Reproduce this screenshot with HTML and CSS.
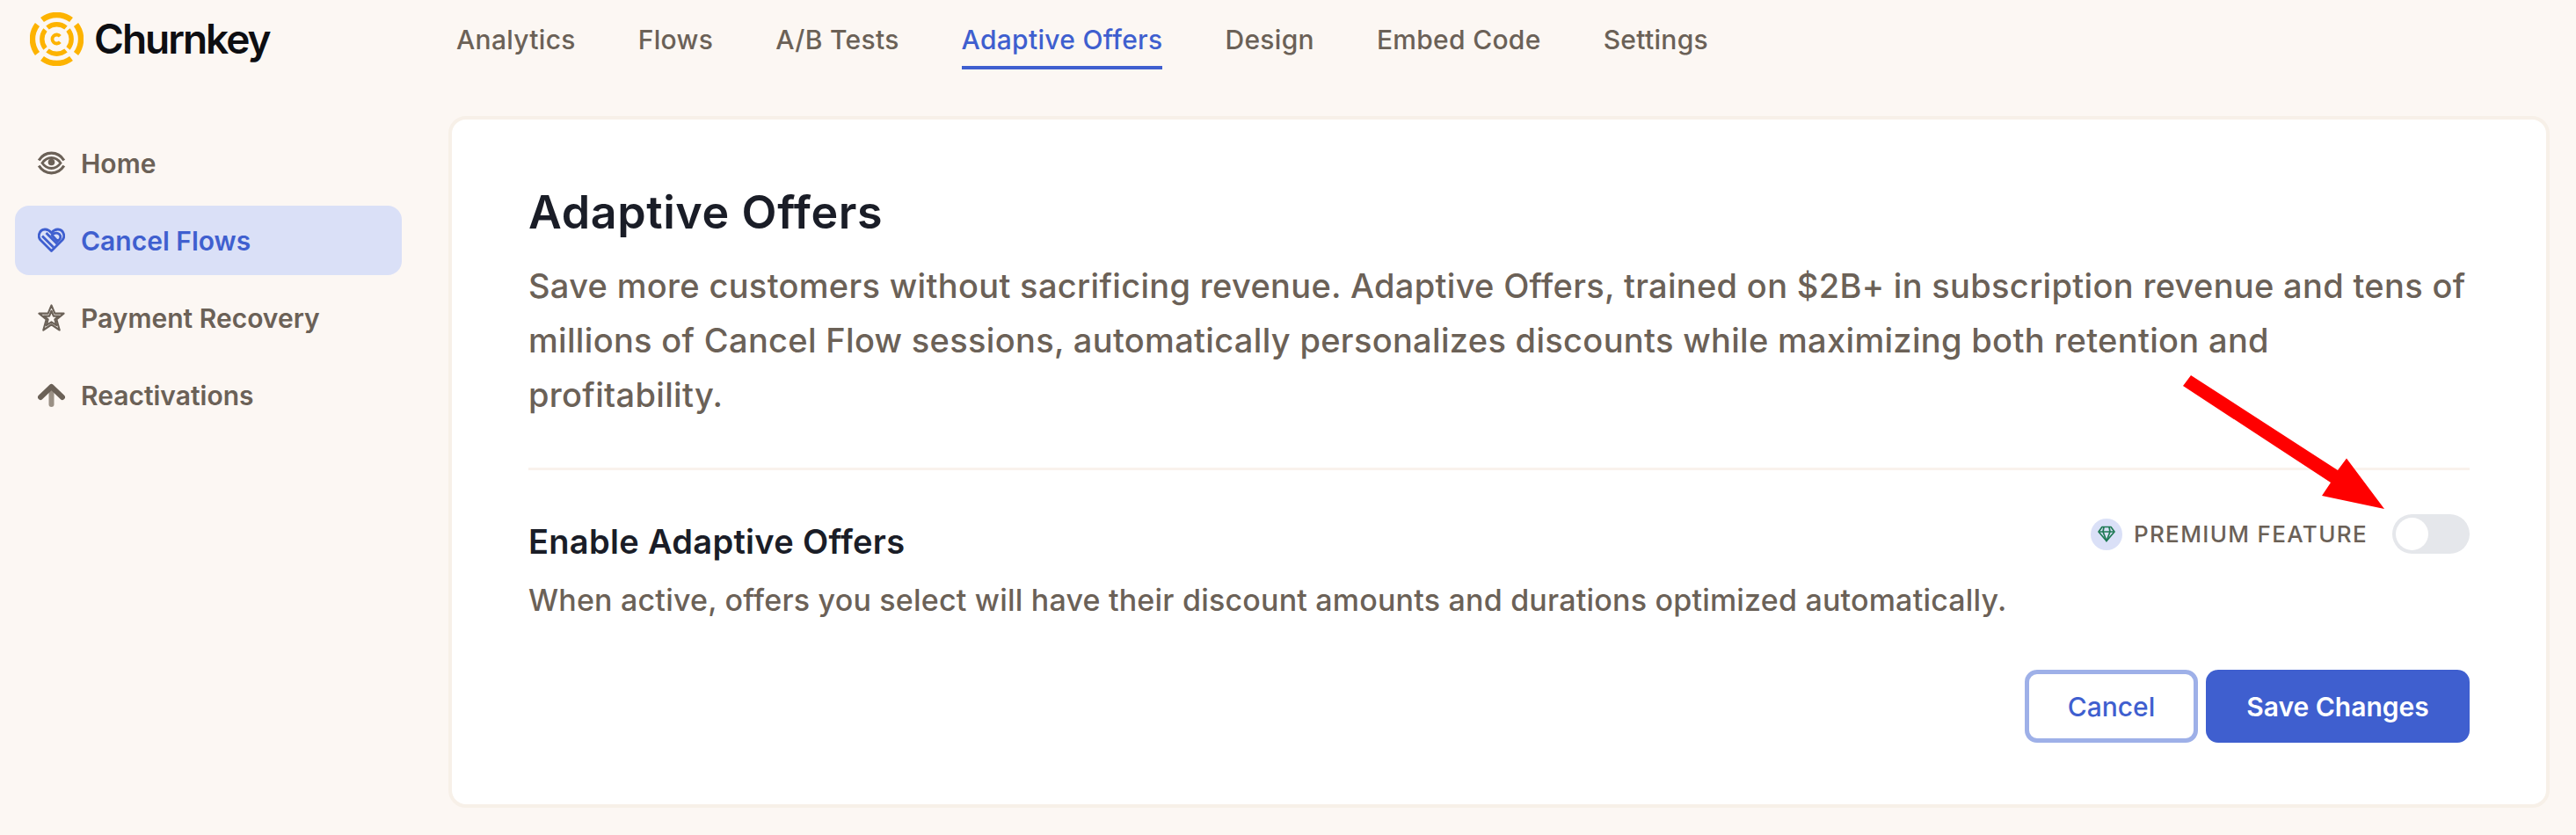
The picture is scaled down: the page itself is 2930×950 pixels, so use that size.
FILE: index.html
```html
<!DOCTYPE html>
<html lang="en">
<head>
<meta charset="utf-8">
<title>Churnkey – Adaptive Offers</title>
<link rel="stylesheet" href="styles.css">
</head>
<body>
<header class="topbar">
  <a class="brand">
    <svg class="logo" viewBox="0 0 61 61" aria-hidden="true">
      <defs>
        <g id="logo-quad" fill="none" stroke="#fdb300" stroke-linecap="butt">
          <path stroke-width="6.400" d="M14 8.500A27.300 27.300 0 0 1 47 8.500"/>
          <path stroke-width="5.400" d="M20 17.500A16.800 16.800 0 0 1 41 17.500"/>
        </g>
      </defs>
      <use href="#logo-quad"/>
      <use href="#logo-quad" transform="rotate(90 30.5 30.5)"/>
      <use href="#logo-quad" transform="rotate(180 30.5 30.5)"/>
      <use href="#logo-quad" transform="rotate(270 30.5 30.5)"/>
      <path d="M34.300 27.300A5 5 0 1 0 34.300 33.700" fill="none" stroke="#fdb300" stroke-width="3.800"/>
    </svg>
    <span class="brand-name">Churnkey</span>
  </a>
  <nav class="tabs">
    <a class="tab">Analytics</a>
    <a class="tab">Flows</a>
    <a class="tab">A/B Tests</a>
    <a class="tab tab-active">Adaptive Offers</a>
    <a class="tab">Design</a>
    <a class="tab">Embed Code</a>
    <a class="tab">Settings</a>
  </nav>
</header>

<div class="layout">
  <aside class="sidebar">
    <a class="side-item">
      <svg class="side-icon" viewBox="0 0 31 26" aria-hidden="true">
        <g fill="none" stroke="currentColor" stroke-width="3.200">
          <path d="M1.200 10C5 3.800 10 1.700 15.500 1.700S26 3.800 29.800 10"/>
          <path d="M1.200 16C5 22.200 10 24.300 15.500 24.300S26 22.200 29.800 16"/>
          <path stroke-width="2.800" d="M5 13C8 8.800 11.500 7 15.500 7S23 8.800 26 13C23 17.200 19.500 19 15.500 19S8 17.200 5 13Z"/>
        </g>
        <circle cx="15.500" cy="12" r="3.800" fill="currentColor"/>
      </svg>
      <span>Home</span>
    </a>
    <a class="side-item side-active">
      <svg class="side-icon" viewBox="0 0 31 28" aria-hidden="true">
        <g fill="none" stroke="currentColor" stroke-width="2.800" stroke-linejoin="round">
          <path d="M15.500 26 3 13.500C-.5 9.500 1.500 2 8 1.500 11 1.300 13.500 3 15.500 5.500 17.500 3 20 1.300 23 1.500 29.500 2 31.500 9.500 28 13.500Z"/>
          <path d="M5 9 18 22M9.500 5.500 22 18"/>
          <path d="M16 8 22.500 15C26 12.500 27 9.500 24.500 7 22 4.800 18.500 5.500 16 8Z"/>
        </g>
      </svg>
      <span>Cancel Flows</span>
    </a>
    <a class="side-item">
      <svg class="side-icon" viewBox="0 0 31 32" aria-hidden="true">
        <g fill="none" stroke="currentColor" stroke-linejoin="round">
          <path stroke-width="2.200" d="M15.500 1.500 19.500 11H30L21.500 18 25 30.500 15.500 24 6 30.500 9.500 18 1 11H11.500Z"/>
          <path stroke-width="2.200" d="M15.500 8 18 14H24.500L19.500 18 21.500 25 15.500 21 9.500 25 11.500 18 6.500 14H13Z"/>
        </g>
      </svg>
      <span>Payment Recovery</span>
    </a>
    <a class="side-item">
      <svg class="side-icon" viewBox="0 0 31 26" aria-hidden="true">
        <path d="M15.500 10V23.500" fill="none" stroke="#9a9085" stroke-width="6" stroke-linecap="round"/>
        <path d="M3 15.500 15.500 3.500 28 15.500" fill="none" stroke="currentColor" stroke-width="6" stroke-linecap="round" stroke-linejoin="round"/>
      </svg>
      <span>Reactivations</span>
    </a>
  </aside>

  <main class="card">
    <h1 class="title">Adaptive Offers</h1>
    <p class="lead">Save more customers without sacrificing revenue. Adaptive Offers, trained on $2B+ in subscription revenue and tens of millions of Cancel Flow sessions, automatically personalizes discounts while maximizing both retention and profitability.</p>
    <hr class="divider">
    <section class="setting">
      <div class="setting-text">
        <h2 class="setting-title">Enable Adaptive Offers</h2>
        <p class="setting-desc">When active, offers you select will have their discount amounts and durations optimized automatically.</p>
      </div>
      <div class="setting-control">
        <span class="gem">
          <svg class="gem-icon" viewBox="0 0 20 19" aria-hidden="true">
            <g fill="none" stroke="#1f7a55" stroke-width="1.700" stroke-linejoin="round">
              <path d="M5 1.500H15L19 7 10 17.500 1 7Z"/>
              <path d="M1 7H19M7 1.500 6 7 10 17.500 14 7 13 1.500"/>
            </g>
          </svg>
        </span>
        <span class="premium">PREMIUM FEATURE</span>
        <span class="toggle"><span class="knob"></span></span>
      </div>
    </section>
    <div class="actions">
      <button class="btn btn-ghost">Cancel</button>
      <button class="btn btn-primary">Save Changes</button>
    </div>
    <svg class="red-arrow" viewBox="0 0 240 160" aria-hidden="true">
      <polygon fill="#ff0000" points="3,15 12,3 179,111 189,97.500 232,155 161,140 171,125"/>
    </svg>
  </main>
</div>
</body>
</html>
```

FILE: styles.css
```css
* { box-sizing: border-box; }

html, body {
  margin: 0;
  height: 950px;
  overflow: hidden;
  background: #fcf7f3;
  font-family: Inter, "Liberation Sans", sans-serif;
  color: #6b6157;
}

a { color: inherit; text-decoration: none; }

.topbar {
  display: flex;
  height: 132px;
}

.brand {
  width: 519px;
  padding: 14px 0 0 34px;
  display: flex;
  align-items: flex-start;
  gap: 12px;
}

.logo { width: 61px; height: 61px; flex: none; }

.brand-name {
  font-size: 46px;
  line-height: 61px;
  font-weight: 600;
  letter-spacing: -2px;
  color: #0d0e12;
}

.tabs {
  display: flex;
  gap: 71px;
  align-items: flex-start;
}

.tab {
  display: block;
  font-size: 30px;
  line-height: 40px;
  font-weight: 500;
  letter-spacing: .3px;
  padding-top: 25px;
  height: 79px;
}

.tab-active {
  color: #3f5fcf;
  border-bottom: 4px solid #3f5fcf;
}

.layout {
  display: flex;
  height: 787px;
}

.sidebar {
  width: 510px;
  flex: none;
  padding: 14px 53px 0 17px;
  display: flex;
  flex-direction: column;
  gap: 9px;
}

.side-item {
  display: flex;
  align-items: center;
  gap: 18px;
  height: 79px;
  padding-left: 26px;
  border-radius: 16px;
  font-size: 30px;
  font-weight: 600;
}

.side-active {
  background: #dae0f7;
  color: #3f5fcf;
}

.side-icon { width: 31px; height: 31px; flex: none; }

.card {
  position: relative;
  width: 2390px;
  height: 787px;
  background: #fff;
  border: 4px solid #f7f0e8;
  border-radius: 20px;
  padding: 76px 87px 0;
}

.title {
  margin: 0 0 22px;
  font-size: 52px;
  line-height: 60px;
  font-weight: 600;
  letter-spacing: .6px;
  color: #1a1d27;
}

.lead {
  margin: 0;
  font-size: 38px;
  line-height: 62px;
  font-weight: 500;
  letter-spacing: .32px;
}

.divider {
  margin: 52px 0 50px;
  height: 3px;
  border: 0;
  background: #f9f2ec;
}

.setting {
  display: flex;
  justify-content: space-between;
  align-items: flex-start;
}

.setting-text { padding-top: 6px; }

.setting-title {
  margin: 0 0 20px;
  font-size: 38px;
  line-height: 50px;
  font-weight: 600;
  letter-spacing: .3px;
  color: #1a1d27;
}

.setting-desc {
  margin: 0;
  font-size: 34px;
  line-height: 44px;
  font-weight: 500;
  letter-spacing: .2px;
}

.setting-control {
  display: flex;
  align-items: center;
}

.gem {
  width: 36px;
  height: 36px;
  border-radius: 50%;
  background: #dae0f7;
  display: flex;
  align-items: center;
  justify-content: center;
  margin-right: 13px;
}

.gem-icon { width: 20px; height: 19px; }

.premium {
  font-size: 26px;
  font-weight: 500;
  letter-spacing: 1.35px;
  margin-right: 28px;
}

.toggle {
  display: block;
  width: 88px;
  height: 45px;
  padding: 4px;
  border-radius: 23px;
  background: #e5e7eb;
}

.knob {
  display: block;
  width: 37px;
  height: 37px;
  border-radius: 50%;
  background: #fff;
}

.actions {
  display: flex;
  justify-content: flex-end;
  gap: 9px;
  margin-top: 57px;
}

.btn {
  height: 83px;
  border-radius: 14px;
  font-family: inherit;
  font-size: 30px;
}

.btn-ghost {
  width: 197px;
  background: #fff;
  border: 5px solid #9eb0e8;
  color: #3f5fcf;
  font-weight: 500;
}

.btn-primary {
  width: 300px;
  background: #3f5fcf;
  border: 0;
  color: #fff;
  font-weight: 600;
}

.red-arrow {
  position: absolute;
  left: 1966px;
  top: 288px;
  width: 240px;
  height: 160px;
}
```
